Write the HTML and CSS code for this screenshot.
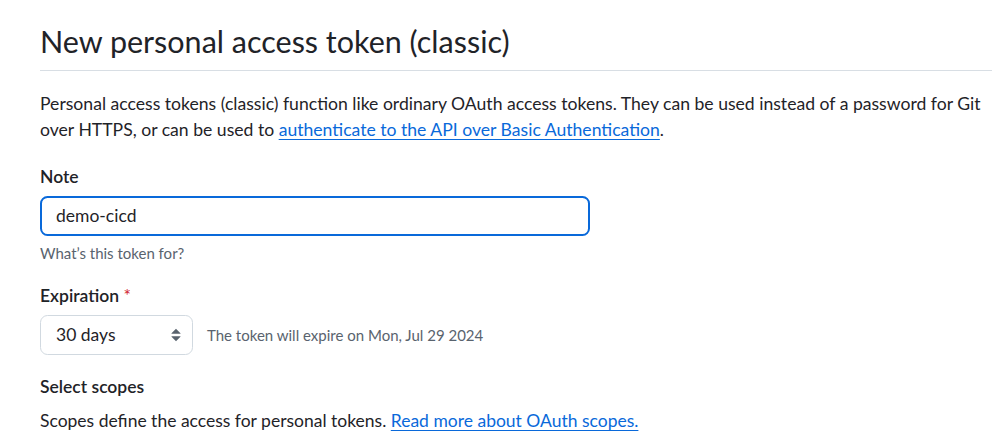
FILE: index.html
```html
<!DOCTYPE html>
<html lang="en">
<head>
<meta charset="utf-8">
<title>New personal access token (classic)</title>
<link rel="stylesheet" href="styles.css">
</head>
<body>
<main class="page">
  <div class="subhead">
    <h1 class="subhead-heading">New personal access token (classic)</h1>
  </div>
  <p class="lead">Personal access tokens (classic) function like ordinary OAuth access tokens. They can be used instead of a password for Git over HTTPS, or can be used to <a href="#">authenticate to the API over Basic Authentication</a>.</p>

  <div class="form-group">
    <label class="label" for="note">Note</label>
    <input id="note" class="input input-focus" type="text" value="demo-cicd">
    <p class="note">What’s this token for?</p>
  </div>

  <div class="form-group">
    <label class="label">Expiration <span class="required">*</span></label>
    <div class="expire-row">
      <div class="select">
        <span>30 days</span>
        <svg class="select-icon" viewBox="0 0 16 16" width="20" height="20" aria-hidden="true"><path fill="#59636e" d="M4.427 9.427l3.396 3.396a.25.25 0 00.354 0l3.396-3.396A.25.25 0 0011.396 9H4.604a.25.25 0 00-.177.427zM4.427 6.573l3.396-3.396a.25.25 0 01.354 0l3.396 3.396A.25.25 0 0111.396 7H4.604a.25.25 0 01-.177-.427z"/></svg>
      </div>
      <span class="expire-note">The token will expire on Mon, Jul 29 2024</span>
    </div>
  </div>

  <h3 class="scopes-title">Select scopes</h3>
  <p class="scopes-text">Scopes define the access for personal tokens. <a href="#">Read more about OAuth scopes.</a></p>
</main>
</body>
</html>
```

FILE: styles.css
```css
* { box-sizing: border-box; }

html, body {
  margin: 0;
  padding: 0;
  background: #ffffff;
}

body {
  font-family: "Segoe UI", Lato, "Noto Sans", "Liberation Sans", sans-serif;
  font-size: 17.5px;
  line-height: 26.25px;
  color: #1f2328;
}

.page {
  padding: 0 0 0 40px;
}

.subhead {
  padding-top: 22px;
  padding-bottom: 10px;
  margin-bottom: 20px;
  border-bottom: 1px solid #d8dee4;
}

.subhead-heading {
  margin: 0;
  font-size: 30.5px;
  line-height: 38px;
  font-weight: 400;
}

a {
  color: #0969da;
  text-decoration: underline;
  text-underline-offset: 3px;
}

.lead {
  margin: 0 0 20px;
  padding-right: 8px;
  font-size: 17.6px;
}

.form-group {
  margin: 0 0 19px;
}

.label {
  display: block;
  font-weight: 600;
  margin-bottom: 6px;
}

.required {
  color: #d1242f;
  font-weight: 400;
}

.input {
  display: block;
  width: 550px;
  height: 40px;
  padding: 0 15px;
  font: inherit;
  color: #1f2328;
  background: #ffffff;
  border: 1px solid #d1d9e0;
  border-radius: 7.5px;
  outline: none;
}

.input-focus {
  border: 2px solid #0969da;
  padding: 0 14px;
}

.note {
  margin: 6px 0 0;
  font-size: 15px;
  line-height: 22px;
  color: #59636e;
}

.expire-row {
  display: flex;
  align-items: center;
  gap: 14px;
}

.select {
  display: flex;
  align-items: center;
  justify-content: space-between;
  width: 153px;
  height: 40px;
  padding: 0 6px 0 15px;
  border: 1px solid #d1d9e0;
  border-radius: 7.5px;
  background: #ffffff;
}

.select-icon {
  display: block;
}

.expire-note {
  font-size: 15px;
  color: #59636e;
}

.scopes-title {
  margin: 0 0 8px;
  font-size: 17.5px;
  line-height: 26px;
  font-weight: 600;
}

.scopes-text {
  margin: 0;
}
```
